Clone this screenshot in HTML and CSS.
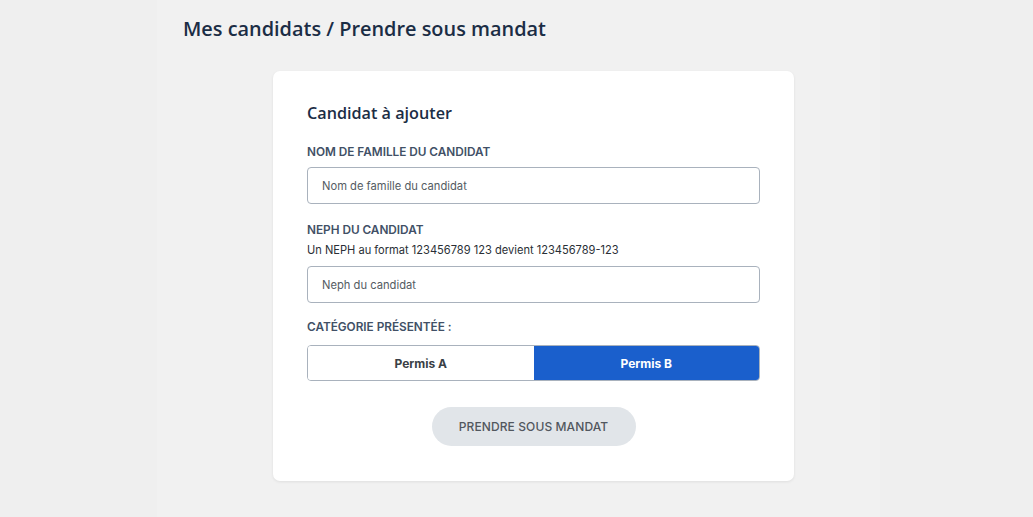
FILE: index.html
```html
<!DOCTYPE html>
<html lang="fr">
<head>
<meta charset="utf-8">
<title>Prendre sous mandat</title>
<link rel="stylesheet" href="styles.css">
</head>
<body>
<div class="page">
  <main class="column">
    <h1 class="title">Mes candidats / Prendre sous mandat</h1>
    <section class="card">
      <h2 class="card-title">Candidat à ajouter</h2>
      <label class="label label-first" for="nom">NOM DE FAMILLE DU CANDIDAT</label>
      <input class="input input-first" id="nom" type="text" placeholder="Nom de famille du candidat">
      <label class="label label-neph" for="neph">NEPH DU CANDIDAT</label>
      <p class="hint">Un NEPH au format 123456789 123 devient 123456789-123</p>
      <input class="input input-neph" id="neph" type="text" placeholder="Neph du candidat">
      <div class="label label-cat">CATÉGORIE PRÉSENTÉE :</div>
      <div class="toggle">
        <button class="toggle-btn" type="button">Permis A</button>
        <button class="toggle-btn active" type="button">Permis B</button>
      </div>
      <div class="actions">
        <button class="submit" type="button">PRENDRE SOUS MANDAT</button>
      </div>
    </section>
  </main>
</div>
</body>
</html>
```
FILE: styles.css
```css
* { box-sizing: border-box; }
html, body { margin: 0; padding: 0; }
body {
  background: #efefef;
  font-family: "Inter", "Liberation Sans", Arial, sans-serif;
  color: #1e3048;
}
.page {
  min-height: 100vh;
  display: flex;
}
.column {
  margin-left: 157px;
  width: 723px;
  min-height: 517px;
  background: #f1f1f1;
  padding-top: 15px;
}
.title {
  margin: 0 0 0 26px;
  font-family: "Open Sans", "Liberation Sans", sans-serif;
  font-weight: 600;
  font-size: 19.9px;
  line-height: 28px;
  color: #1b2d45;
}
.card {
  margin: 28px 0 0 116px;
  width: 521px;
  background: #fff;
  border-radius: 7px;
  box-shadow: 0 1px 3px rgba(0, 0, 0, 0.08);
  padding: 31px 34px 35px 34px;
  display: flex;
  flex-direction: column;
}
.card-title {
  margin: 0;
  font-family: "Open Sans", "Liberation Sans", sans-serif;
  font-weight: 600;
  font-size: 16.2px;
  line-height: 22px;
  color: #1b2d45;
}
.label {
  display: block;
  font-family: "Inter", "Liberation Sans", sans-serif;
  font-weight: 600;
  font-size: 11.8px;
  line-height: 14px;
  color: #415066;
  letter-spacing: -0.02px;
}
.label-first { margin-top: 21px; }
.label-neph { margin-top: 19px; }
.label-cat { margin-top: 17px; }
.input {
  display: block;
  width: 100%;
  height: 37px;
  border: 1px solid #a9b2bd;
  border-radius: 4px;
  padding: 0 14px;
  font-family: "Inter", "Liberation Sans", sans-serif;
  font-size: 11.2px;
  color: #333;
  background: #fff;
}
.input::placeholder { color: #555c63; }
.input-first { margin-top: 8px; }
.input-neph { margin-top: 10px; }
.hint {
  margin: 7px 0 0;
  font-family: "Inter", "Liberation Sans", sans-serif;
  font-size: 11.1px;
  line-height: 12px;
  color: #2a2f36;
  letter-spacing: 0;
}
.toggle {
  margin-top: 11px;
  display: grid;
  grid-template-columns: 1fr 1fr;
  height: 36px;
  border: 1px solid #a9b2bd;
  border-radius: 4px;
  overflow: hidden;
}
.toggle-btn {
  border: 0;
  margin: 0;
  background: #fff;
  font-family: "Inter", "Liberation Sans", sans-serif;
  font-weight: 700;
  font-size: 12px;
  color: #3a3f46;
  cursor: pointer;
}
.toggle-btn.active {
  background: #1a5fcc;
  color: #fff;
}
.actions {
  margin-top: 26px;
  display: flex;
  justify-content: center;
}
.submit {
  width: 204px;
  height: 39px;
  border: 0;
  border-radius: 20px;
  background: #e1e5e9;
  font-family: "Inter", "Liberation Sans", sans-serif;
  font-weight: 500;
  font-size: 12px;
  color: #51575e;
  letter-spacing: 0.1px;
}
```
